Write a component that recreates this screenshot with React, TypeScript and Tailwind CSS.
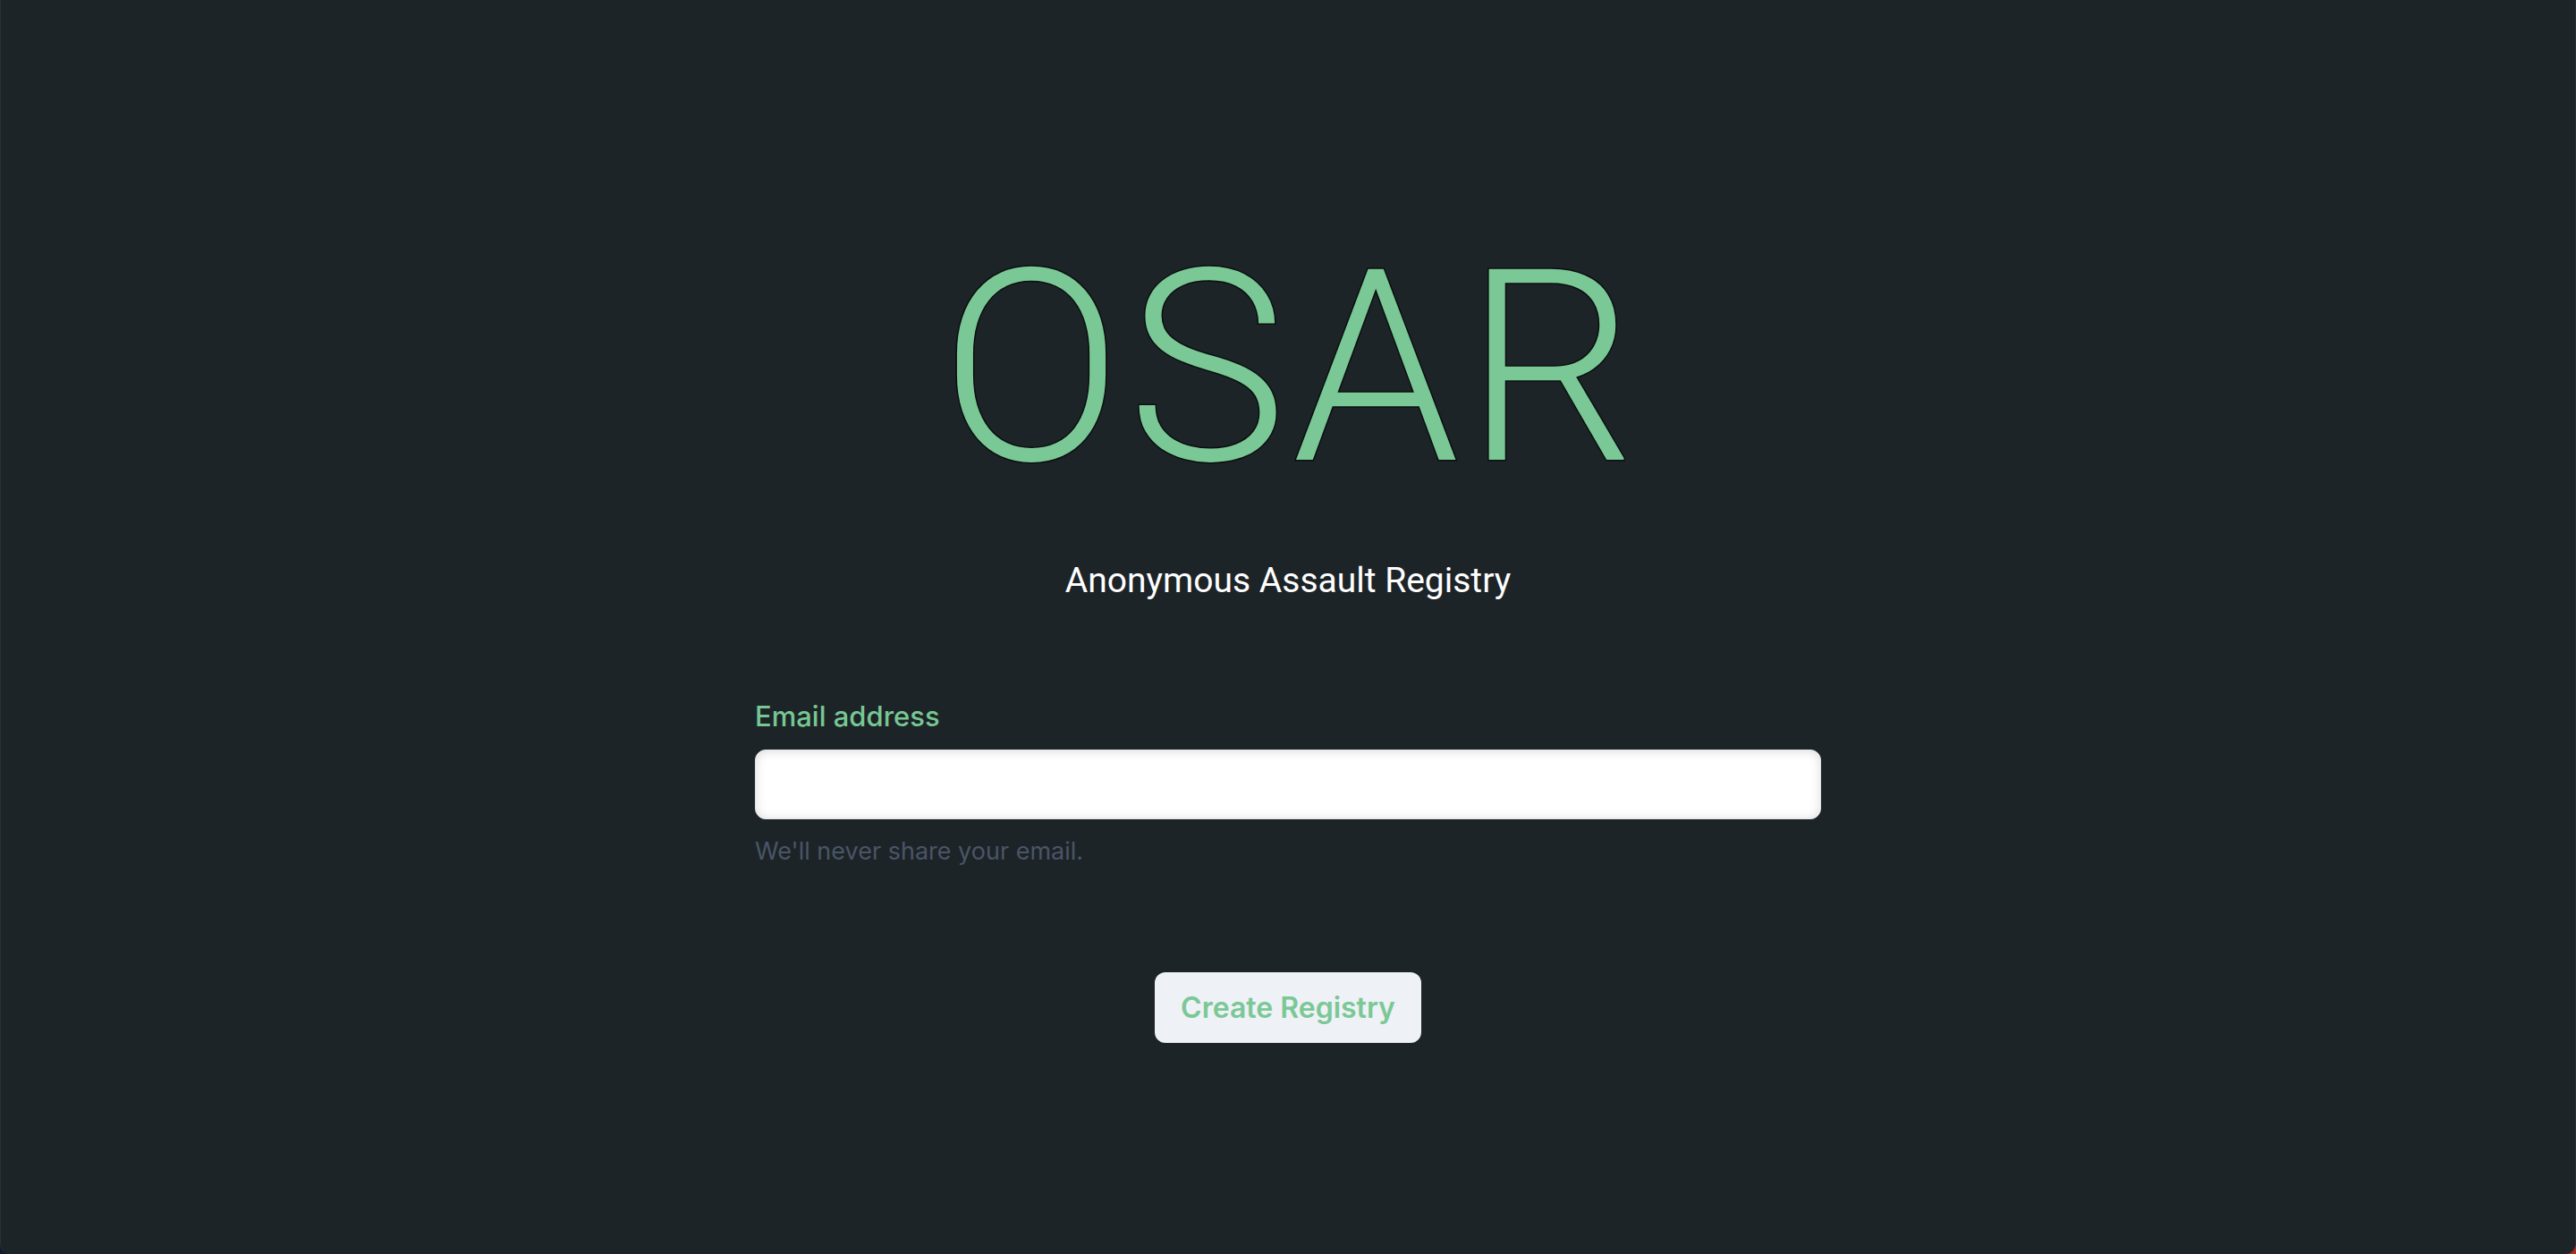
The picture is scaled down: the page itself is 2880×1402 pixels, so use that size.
import React from "react";

export default function App() {
  return (
    <div className="min-h-[1402px] w-full bg-gradient-to-r from-[#101a30] via-[#101a30] to-[#a8301c]">
      <div className="flex min-h-[1402px] w-full flex-col items-center rounded-b-[12px] border-x border-[#2a3236] bg-[#1d2428]">
        <h1 className="mt-[262px] pl-[6px] text-[300px] font-light leading-none tracking-[6px] text-[#7ac895] [font-family:Roboto,'Noto_Sans',sans-serif] [-webkit-text-stroke:3px_#0b0f10] [paint-order:stroke_fill]">
          OSAR
        </h1>
        <p className="mt-[68px] text-[39px] leading-none text-white [font-family:Roboto,'Noto_Sans',sans-serif]">
          Anonymous Assault Registry
        </p>
        <form
          className="mt-[116px] flex w-[1192px] flex-col [font-family:Inter,'Noto_Sans',sans-serif]"
          onSubmit={(e) => e.preventDefault()}
        >
          <label htmlFor="email" className="text-[31px] font-medium leading-none text-[#77c793]">
            Email address
          </label>
          <input
            id="email"
            type="email"
            className="mt-[22px] h-[78px] w-full rounded-[12px] border border-[#dfe3e8] bg-white px-5 text-[30px] text-gray-800 shadow-[inset_0_1px_12px_rgba(0,0,0,0.14)] outline-none"
          />
          <small className="mt-[22px] text-[27px] leading-none text-[#4a5566]">
            We'll never share your email.
          </small>
          <div className="mt-[122px] flex justify-center">
            <button
              type="submit"
              className="h-[79px] w-[298px] rounded-[12px] bg-[#eef1f6] text-[32px] font-semibold text-[#7bc896]"
            >
              Create Registry
            </button>
          </div>
        </form>
      </div>
    </div>
  );
}
